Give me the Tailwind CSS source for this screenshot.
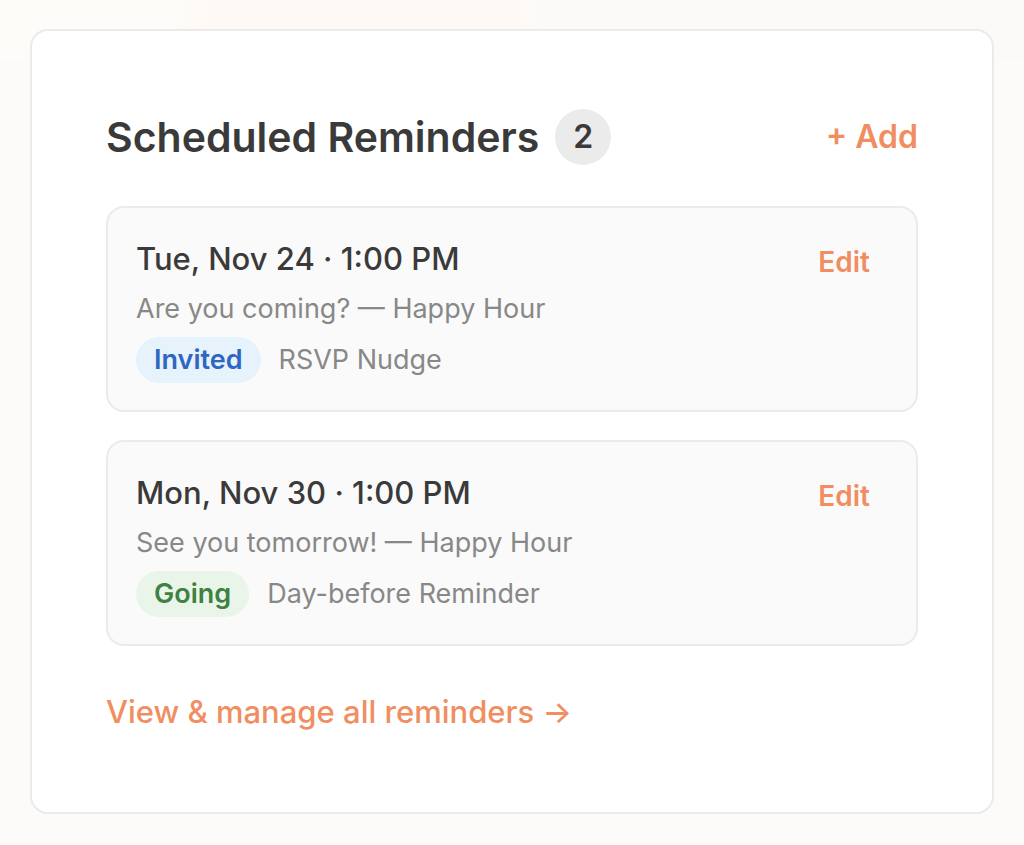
<!DOCTYPE html>
<html lang="en">
<head>
<meta charset="utf-8">
<meta name="viewport" content="width=device-width, initial-scale=1">
<title>Scheduled Reminders</title>
<script src="https://cdn.jsdelivr.net/npm/@tailwindcss/browser@4"></script>
</head>
<body class="min-h-screen bg-[#fcfbf9] bg-[linear-gradient(to_right,#fdfcf8_0%,#fdfcf8_17%,#fef9f5_20%,#fef9f5_51%,#fbfaf8_53%,#fbfaf8_100%)] bg-[length:100%_60px] bg-no-repeat px-[30px] py-[29px] font-['Inter',sans-serif] text-[#3a3a3a]">
<main class="rounded-[18px] border-2 border-[#ebebeb] bg-white px-[74px] pt-[78px] pb-[80px]">
  <header class="flex items-center justify-between">
    <div class="flex items-center gap-4">
      <h1 class="text-[41px] leading-[56px] font-semibold">Scheduled Reminders</h1>
      <span class="flex size-14 items-center justify-center rounded-full bg-[#ebebeb] text-[32px] leading-10 font-semibold">2</span>
    </div>
    <button type="button" class="text-[32px] leading-10 font-semibold text-[#f08e62]">+ Add</button>
  </header>
  <ul class="mt-[41px] flex flex-col gap-7">
    <li class="flex items-start justify-between rounded-[18px] border-2 border-[#ebebeb] bg-[#fafafa] px-7 pt-[26px] pb-[27px]">
      <div>
        <h2 class="text-[31px] leading-[50px] font-medium">Tue, Nov 24 · 1:00 PM</h2>
        <p class="text-[27px] leading-[50px] text-[#888888]">Are you coming? — Happy Hour</p>
        <div class="mt-[3px] flex items-center gap-[18px] text-[27px] leading-[46px] text-[#888888]">
          <span class="rounded-full bg-[#e6f2fc] px-[18px] font-semibold text-[#2f66c0]">Invited</span>
          <span>RSVP Nudge</span>
        </div>
      </div>
      <button type="button" class="mt-2 mr-[18px] text-[28px] leading-10 font-semibold text-[#f08e62]">Edit</button>
    </li>
    <li class="flex items-start justify-between rounded-[18px] border-2 border-[#ebebeb] bg-[#fafafa] px-7 pt-[26px] pb-[27px]">
      <div>
        <h2 class="text-[31px] leading-[50px] font-medium">Mon, Nov 30 · 1:00 PM</h2>
        <p class="text-[27px] leading-[50px] text-[#888888]">See you tomorrow! — Happy Hour</p>
        <div class="mt-[3px] flex items-center gap-[18px] text-[27px] leading-[46px] text-[#888888]">
          <span class="rounded-full bg-[#eaf5e9] px-[18px] font-semibold text-[#3f8140]">Going</span>
          <span>Day-before Reminder</span>
        </div>
      </div>
      <button type="button" class="mt-2 mr-[18px] text-[28px] leading-10 font-semibold text-[#f08e62]">Edit</button>
    </li>
  </ul>
  <a href="#reminders" class="mt-[46px] inline-block text-[31px] leading-10 font-medium text-[#f08e62]">View &amp; manage all reminders →</a>
</main>
</body>
</html>
